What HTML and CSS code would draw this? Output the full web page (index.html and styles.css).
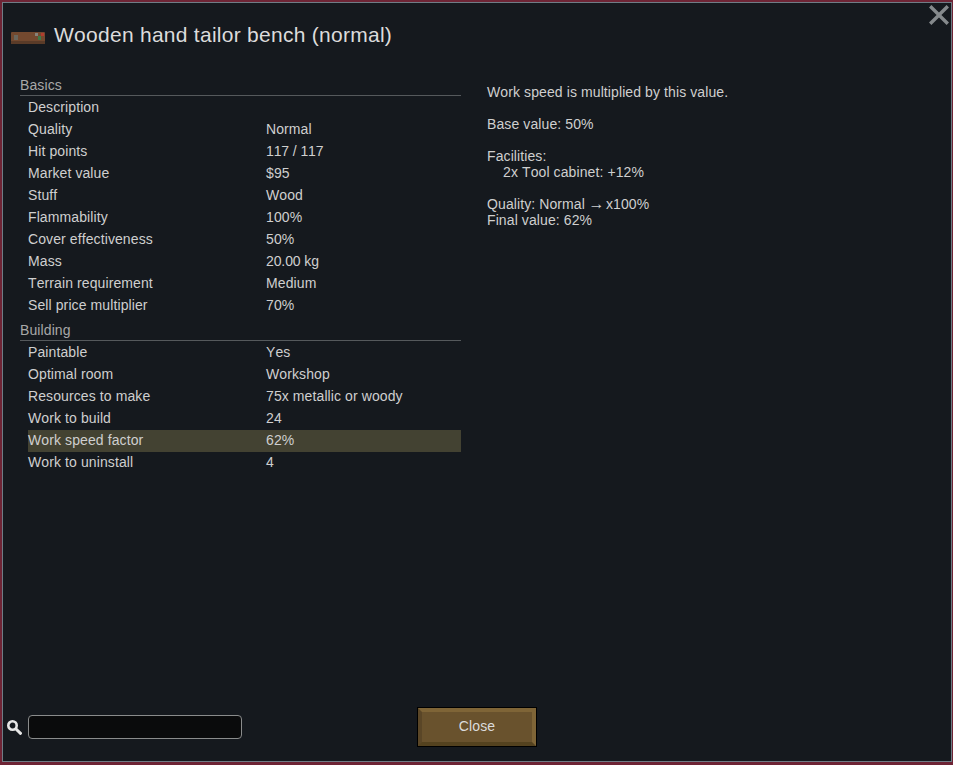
FILE: index.html
```html
<!DOCTYPE html>
<html lang="en">
<head>
<meta charset="utf-8">
<title>Wooden hand tailor bench</title>
<link rel="stylesheet" href="styles.css">
</head>
<body>
<div class="dialog">
  <svg class="close-x" viewBox="0 0 20 20" width="20" height="20"><path d="M0 2.4 L2.4 0 L10 7.6 L17.6 0 L20 2.4 L12.4 10 L20 17.6 L17.6 20 L10 12.4 L2.4 20 L0 17.6 L7.6 10 Z"/></svg>
  <header class="title">
    <svg class="thing" viewBox="0 0 34 12" width="34" height="12">
      <rect width="34" height="12" rx="1" fill="#73492f"/>
      <rect y="9" width="34" height="3" fill="#5a3b28"/>
      <rect x="3" y="3" width="4" height="5" fill="#6a665c"/>
      <rect x="24" y="1" width="3" height="3" fill="#85837a"/>
      <rect x="27" y="4" width="3" height="4" fill="#3d7a48"/>
      <rect x="30" y="1" width="3" height="3" fill="#b03c2e"/>
    </svg>
    <h1>Wooden hand tailor bench (normal)</h1>
  </header>
  <main class="content">
    <section class="stats">
      <h2>Basics</h2>
      <div class="row"><span class="k">Description</span><span></span></div>
      <div class="row"><span class="k">Quality</span><span>Normal</span></div>
      <div class="row"><span class="k">Hit points</span><span class="num">117 / 117</span></div>
      <div class="row"><span class="k">Market value</span><span>$95</span></div>
      <div class="row"><span class="k">Stuff</span><span>Wood</span></div>
      <div class="row"><span class="k">Flammability</span><span>100%</span></div>
      <div class="row"><span class="k">Cover effectiveness</span><span>50%</span></div>
      <div class="row"><span class="k">Mass</span><span class="num">20.00 kg</span></div>
      <div class="row"><span class="k">Terrain requirement</span><span>Medium</span></div>
      <div class="row"><span class="k">Sell price multiplier</span><span>70%</span></div>
      <h2 class="second">Building</h2>
      <div class="row"><span class="k">Paintable</span><span>Yes</span></div>
      <div class="row"><span class="k">Optimal room</span><span>Workshop</span></div>
      <div class="row"><span class="k">Resources to make</span><span>75x metallic or woody</span></div>
      <div class="row"><span class="k">Work to build</span><span>24</span></div>
      <div class="row selected"><span class="k">Work speed factor</span><span>62%</span></div>
      <div class="row"><span class="k">Work to uninstall</span><span>4</span></div>
    </section>
    <aside class="detail">
      <p>Work speed is multiplied by this value.</p>
      <p>Base value: 50%</p>
      <p>Facilities:<br><span class="indent">2x Tool cabinet: +12%</span></p>
      <p>Quality: Normal <span class="arrow">→</span> x100%<br>Final value: 62%</p>
    </aside>
  </main>
  <footer class="bottom">
    <div class="search">
      <svg class="glass" viewBox="0 0 16 16" width="16" height="16"><circle cx="6.5" cy="6.5" r="4.2" fill="none" stroke="#e6e6e6" stroke-width="2.6"/><path d="M10 10 L14.5 14.3" stroke="#e6e6e6" stroke-width="3" stroke-linecap="round"/></svg>
      <input class="field" type="text" aria-label="Search">
    </div>
    <button class="close-btn" type="button">Close</button>
  </footer>
</div>
</body>
</html>
```
FILE: styles.css
```css
* { box-sizing: border-box; }
html, body { height: 100%; }
body {
  margin: 0;
  padding: 2px 1px 3px 2px;
  background: #6e2435;
  font-family: "Liberation Sans", Arial, sans-serif;
  font-size: 14px;
  font-kerning: none;
  letter-spacing: 0.1px;
  color: #cfcfcf;
  overflow: hidden;
}
.dialog {
  position: relative;
  height: 100%;
  display: flex;
  flex-direction: column;
  background: #15191e;
  border: 1px solid #6f7c86;
}
.close-x { position: absolute; top: 2px; right: 2px; fill: #85898c; }
.title {
  display: flex;
  align-items: center;
  gap: 9px;
  padding: 13px 0 0 8px;
  height: 50px;
}
.thing { margin-top: 7px; flex: none; filter: blur(0.4px); }
h1 {
  margin: 0;
  font-size: 21px;
  font-weight: 400;
  line-height: 30px;
  letter-spacing: 0.27px;
  color: #dcdcdc;
}
.content { flex: 1; display: flex; padding: 18px 0 0 17px; }
.stats { width: 441px; flex: none; }
h2 {
  margin: 0 0 1px;
  height: 25px;
  padding-top: 6px;
  font-size: 14px;
  line-height: 16px;
  font-weight: 400;
  color: #a8a8a8;
  border-bottom: 1px solid #55595c;
}
.second { height: 24px; padding-top: 5px; }
.row {
  display: flex;
  margin-left: 8px;
  height: 22px;
  line-height: 20px;
}
.k { width: 238px; flex: none; }
.num { letter-spacing: -0.1px; }
.selected { background: #434232; }
.detail { padding: 13px 0 0 26px; line-height: 16px; }
.detail p { margin: 0 0 16px; }
.indent { padding-left: 16px; }
.arrow { font-size: 16px; line-height: 14px; letter-spacing: -2.5px; margin-left: -0.5px; }
.bottom { height: 58px; display: flex; align-items: flex-start; }
.search { display: flex; align-items: center; gap: 6px; padding: 12px 0 0 3px; width: 414px; }
.glass { flex: none; }
.field {
  width: 214px;
  height: 24px;
  background: #0a0b0c;
  border: 1px solid #8a8c8c;
  border-radius: 4px;
  outline: none;
}
.close-btn {
  width: 118px;
  height: 38px;
  margin: 5px 0 0 1px;
  padding: 0 0 2px;
  font: 14px "Liberation Sans", Arial, sans-serif;
  letter-spacing: 0.1px;
  color: #dcdcdc;
  background: #69522d;
  border-style: solid;
  border-width: 4px;
  border-color: #7f6537 #7f6537 #54421f #5a4627;
  outline: 1px solid #000;
}
```
